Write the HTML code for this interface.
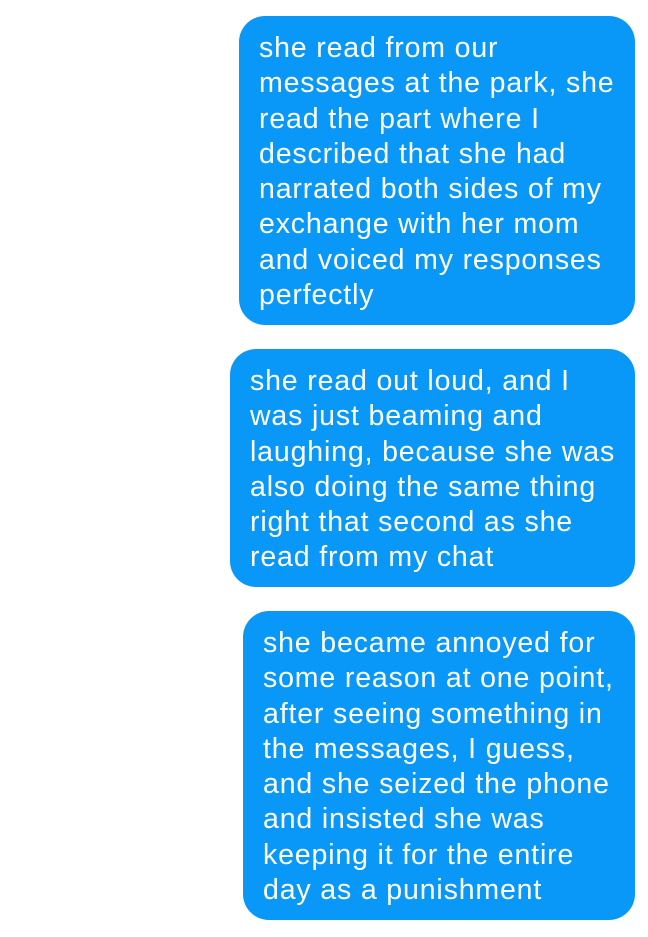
<!DOCTYPE html>
<html><head><style>
body{margin:0;width:648px;height:937px;background:#fff;font-family:"Liberation Sans",Arial,sans-serif;position:relative;overflow:hidden}
.b{position:absolute;background:#0998f7;color:#fff;border-radius:26px;box-sizing:border-box;padding:15px 0 0 20px;font-size:28.5px;line-height:35.3px;white-space:nowrap;letter-spacing:0.85px}
</style></head><body>
<div class="b" style="left:239px;top:16px;width:396px;height:309px">she read from our<br>messages at the park, she<br>read the part where I<br>described that she had<br>narrated both sides of my<br>exchange with her mom<br>and voiced my responses<br>perfectly</div>
<div class="b" style="left:230px;top:349px;width:405px;height:238px">she read out loud, and I<br>was just beaming and<br>laughing, because she was<br>also doing the same thing<br>right that second as she<br>read from my chat</div>
<div class="b" style="left:243px;top:611px;width:392px;height:309px">she became annoyed for<br>some reason at one point,<br>after seeing something in<br>the messages, I guess,<br>and she seized the phone<br>and insisted she was<br>keeping it for the entire<br>day as a punishment</div>
</body></html>
